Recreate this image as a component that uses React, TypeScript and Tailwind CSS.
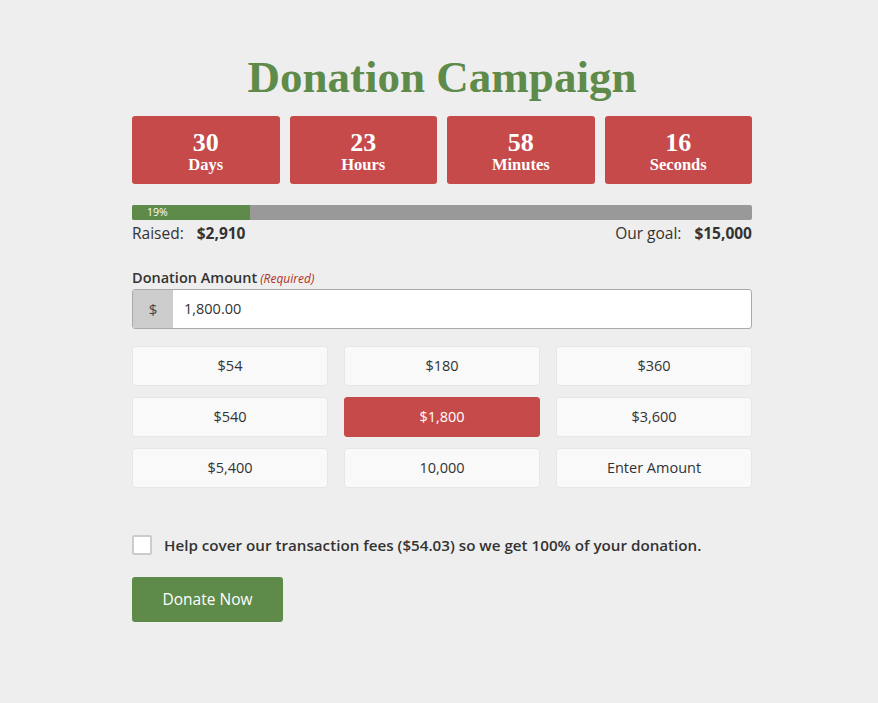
import { useState } from 'react';

const countdown = [
  { value: '30', label: 'Days' },
  { value: '23', label: 'Hours' },
  { value: '58', label: 'Minutes' },
  { value: '16', label: 'Seconds' },
];

const amounts = ['$54', '$180', '$360', '$540', '$1,800', '$3,600', '$5,400', '10,000', 'Enter Amount'];

export default function App() {
  const [selected, setSelected] = useState('$1,800');
  const [coverFees, setCoverFees] = useState(false);

  return (
    <div className="min-h-[703px] w-full bg-[#eeeeee] font-['Open_Sans',sans-serif] text-[#333]">
      <div className="ml-[132px] w-[620px] pt-[50px]">
        <h1 className="text-center font-['Liberation_Serif',serif] text-[45px] font-bold leading-[54px] text-[#5e8a4a]">
          Donation Campaign
        </h1>

        <div className="mt-[12px] grid grid-cols-4 gap-[10px]">
          {countdown.map((c) => (
            <div key={c.label} className="flex h-[68px] flex-col items-center justify-center rounded-[3px] bg-[#c64a4a] pt-[2px] font-['Liberation_Serif',serif] text-white">
              <span className="text-[26px] font-bold leading-[26px]">{c.value}</span>
              <span className="text-[16.5px] font-bold leading-[17px]">{c.label}</span>
            </div>
          ))}
        </div>

        <div className="mt-[21px] h-[15px] w-full overflow-hidden rounded-[2px] bg-[#999999]">
          <div className="flex h-full w-[19%] items-center bg-[#5e8a4a] pl-[15px] text-[10.5px] leading-none text-white">
            19%
          </div>
        </div>
        <div className="mt-[2px] flex justify-between text-[15.5px] leading-[22px]">
          <div>
            Raised:<span className="ml-[13px] font-bold">$2,910</span>
          </div>
          <div>
            Our goal:<span className="ml-[13px] font-bold">$15,000</span>
          </div>
        </div>

        <div className="mt-[25px] text-[14.5px] font-semibold leading-[18px]">
          Donation Amount
          <span className="ml-[3px] text-[12px] font-normal italic text-[#b0311f]">(Required)</span>
        </div>
        <div className="mt-[1px] flex h-[40px] overflow-hidden rounded-[3px] border border-[#aaaaaa] bg-white">
          <div className="flex w-[40px] items-center justify-center bg-[#cccccc] text-[15px] text-[#444]">$</div>
          <div className="flex items-center pl-[11px] text-[14.5px]">1,800.00</div>
        </div>

        <div className="mt-[17px] grid grid-cols-3 gap-x-[16px] gap-y-[11px]">
          {amounts.map((a) => (
            <button
              key={a}
              onClick={() => setSelected(a)}
              className={
                a === selected
                  ? 'h-[40px] rounded-[3px] border border-[#c64a4a] bg-[#c64a4a] text-[14.5px] text-white'
                  : 'h-[40px] rounded-[3px] border border-[#e6e6e6] bg-[#f9f9f9] text-[14.5px] text-[#333]'
              }
            >
              {a}
            </button>
          ))}
        </div>

        <label className="mt-[46px] flex items-center gap-[12px]">
          <input
            type="checkbox"
            checked={coverFees}
            onChange={(e) => setCoverFees(e.target.checked)}
            className="h-[20px] w-[20px] appearance-none rounded-[2px] border-2 border-[#cccccc] bg-white"
          />
          <span className="text-[15.2px] font-semibold leading-[22px]">
            Help cover our transaction fees ($54.03) so we get 100% of your donation.
          </span>
        </label>

        <button className="mt-[21px] h-[45px] w-[151px] rounded-[3px] bg-[#5e8a4a] text-[15.5px] text-white">
          Donate Now
        </button>
      </div>
    </div>
  );
}
